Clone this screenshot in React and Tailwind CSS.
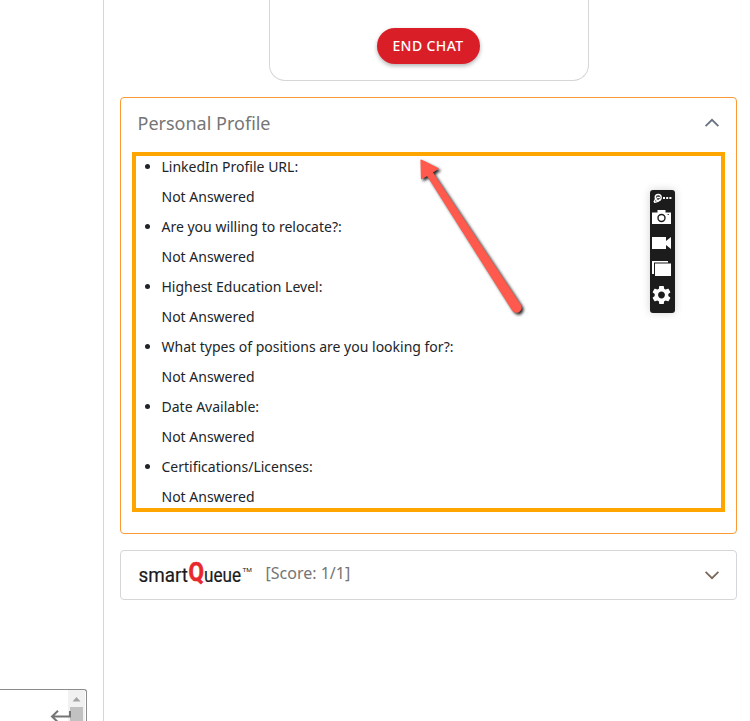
const questions = [
  'LinkedIn Profile URL:',
  'Are you willing to relocate?:',
  'Highest Education Level:',
  'What types of positions are you looking for?:',
  'Date Available:',
  'Certifications/Licenses:',
];

function Chevron({ up }) {
  return (
    <svg width="16" height="10" viewBox="0 0 16 10" fill="none" stroke={up ? '#667180' : '#7b6659'} strokeWidth="1.7">
      <path d={up ? 'M1.6 8.2 8 1.8l6.4 6.4' : 'M1.6 1.8 8 8.2l6.4-6.4'} />
    </svg>
  );
}

function SmartQueueLogo() {
  return (
    <svg width="116" height="30" viewBox="0 -4 116 30" className="font-['Roboto','Liberation_Sans',sans-serif]">
      <text x="0.5" y="17.5" fontSize="20" textLength="49.5" lengthAdjust="spacingAndGlyphs" fill="#1a1a1a" stroke="#1a1a1a" strokeWidth="0.2">smart</text>
      <text x="50.5" y="17" fontSize="25" fontWeight="700" textLength="15.5" lengthAdjust="spacingAndGlyphs" fill="#e8282d" stroke="#e8282d" strokeWidth="0.6">Q</text>
      <text x="66" y="17.5" fontSize="20" textLength="37" lengthAdjust="spacingAndGlyphs" fill="#1a1a1a" stroke="#1a1a1a" strokeWidth="0.2">ueue</text>
      <text x="104.5" y="8" fontSize="6" textLength="9.5" lengthAdjust="spacingAndGlyphs" fill="#1a1a1a">TM</text>
    </svg>
  );
}

function CaptureToolbar() {
  return (
    <div className="absolute left-[650px] top-[190px] h-[123px] w-[25px] rounded-[3px] bg-[#1c1c1c] shadow-[0_0_8px_rgba(0,0,0,0.18)]">
      <svg width="25" height="123" viewBox="0 0 25 123" fill="#fff">
        <g fill="none" stroke="#fff" strokeWidth="1.3">
          <circle cx="8.2" cy="7.5" r="3" />
          <path d="M4 12.2c.3-2.200 1.500-3.200 3-3.700M6.500 7.500h3.500M4 12.200c3 .3 5-1 6.500-3" />
        </g>
        <path d="M13 7h2v2h-2zM16.2 7h2v2h-2zM19.4 7h2v2h-2z" />
        <path fillRule="evenodd" d="M2 22.500h5.500V20h8v2.500H21V34H2zM11.500 23.800a4.200 4.200 0 1 0 0 8.400 4.200 4.200 0 0 0 0-8.400zm0 1.400a2.800 2.800 0 1 1 0 5.600 2.800 2.800 0 0 1 0-5.600z" />
        <path d="M17.500 24h1.500v1h-1.500z" fill="#555" />
        <path d="M2 47h14v4l5-4v12l-5-4v4H2z" />
        <path d="M2 71h16v1.500H4V84H2z" />
        <path d="M5 73.500H21V86H5z" />
        <g transform="translate(.1 93.600) scale(.95)">
          <path d="M19.14 12.94c.04-.3.06-.61.06-.94 0-.32-.02-.64-.07-.94l2.03-1.58c.18-.14.23-.41.12-.61l-1.92-3.32c-.12-.22-.37-.29-.59-.22l-2.39.96c-.5-.38-1.03-.7-1.62-.94l-.36-2.54c-.04-.24-.24-.41-.48-.41h-3.84c-.24 0-.43.17-.47.41l-.36 2.54c-.59.24-1.13.57-1.62.94l-2.39-.96c-.22-.08-.47 0-.59.22L2.74 8.87c-.12.21-.08.47.12.61l2.03 1.58c-.05.3-.09.63-.09.94s.02.64.07.94l-2.03 1.58c-.18.14-.23.41-.12.61l1.92 3.32c.12.22.37.29.59.22l2.39-.96c.5.38 1.03.7 1.62.94l.36 2.54c.05.24.24.41.48.41h3.84c.24 0 .44-.17.47-.41l.36-2.54c.59-.24 1.13-.56 1.62-.94l2.39.96c.22.08.47 0 .59-.22l1.92-3.32c.12-.22.07-.47-.12-.61l-2.01-1.58zM12 15.6c-1.98 0-3.6-1.62-3.6-3.6s1.62-3.6 3.6-3.6 3.6 1.62 3.6 3.6-1.62 3.6-3.6 3.6z" />
        </g>
      </svg>
    </div>
  );
}

function Arrow() {
  return (
    <svg className="absolute left-[410px] top-[150px] drop-shadow-[2px_2px_1.5px_rgba(0,0,0,0.85)]" width="130" height="175" viewBox="410 150 130 175">
      <path
        d="M421 160 438 168.5 432.2 172.3 520.3 305A4.600 4.600 0 0 1 512.500 310L427.3 175.2 421.5 178.5Z"
        fill="#ff5a4d" stroke="#ff5a4d" strokeWidth="1.2" strokeLinejoin="round"
      />
    </svg>
  );
}

export default function App() {
  return (
    <div className="relative flex h-[721px] w-[750px] overflow-hidden bg-white font-['Noto_Sans',sans-serif] text-[#212529]">
      <aside className="flex w-[104px] shrink-0 flex-col justify-end border-r border-[#d6d6d6]">
        <div className="flex h-8 w-[87px] justify-end rounded-tr-[3px] border-r border-t border-[#8c8c8c]">
          <svg width="36" height="31" viewBox="0 0 36 31">
            <path d="M18 0h17v31H18z" fill="#f1f1f1" />
            <path d="M20 17h13v14H20z" fill="#c1c1c1" />
            <path d="M22.500 11.500h8l-4-4.500z" fill="#a3a3a3" />
            <path d="M20 21v5.500H2.500M8 20.800l-6 5.700 6 5.700" fill="none" stroke="#757575" strokeWidth="2" />
          </svg>
        </div>
      </aside>

      <main className="flex flex-1 flex-col pl-4 pr-[13px]">
        <section className="ml-[149px] flex h-[81px] w-80 justify-center rounded-b-2xl border border-t-0 border-[#d6d6d6] pr-[2px] pt-7">
          <button className="h-9 w-[103px] rounded-full bg-[#da1e28] pb-px text-[14px] font-medium tracking-[0.4px] text-white shadow-[0_2px_4px_rgba(0,0,0,0.3)]">
            END CHAT
          </button>
        </section>

        <section className="mt-4 h-[437px] rounded-[4px] border border-[#fb9a35]">
          <header className="flex h-[54px] items-center justify-between pl-[16.5px] pr-4 text-[18px] text-[#757575]">
            <h2 className="pb-[3px]">Personal Profile</h2>
            <div className="pb-[5px]"><Chevron up /></div>
          </header>
          <div className="relative mx-[11px] h-[360px]">
            <ul className="list-disc pl-[29.5px] text-[14px] leading-[30px]">
              {questions.map((question) => (
                <li key={question}>
                  {question}
                  <p>Not Answered</p>
                </li>
              ))}
            </ul>
            <div className="pointer-events-none absolute inset-0 border-4 border-[#ffa500]" />
          </div>
        </section>

        <section className="mt-4 flex h-[50px] items-center rounded-[4px] border border-[#d6d6d6] pl-[17px] pr-4">
          <SmartQueueLogo />
          <span className="ml-[11.500px] pb-[4px] text-[16px] text-[#757575]">[Score: 1/1]</span>
          <div className="ml-auto"><Chevron /></div>
        </section>
      </main>

      <CaptureToolbar />
      <Arrow />
    </div>
  );
}
